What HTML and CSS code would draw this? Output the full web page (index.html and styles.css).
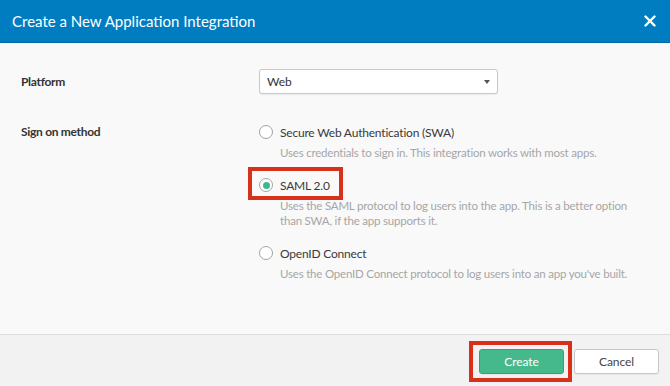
FILE: index.html
```html
<!DOCTYPE html>
<html lang="en">
<head>
    <meta charset="UTF-8">
    <meta name="viewport" content="width=device-width, initial-scale=1.0">
    <title>Create a New Application Integration</title>
    <link rel="stylesheet" href="styles.css">
</head>
<body>
    <div class="modal">
        <div class="modal-header">
            <h1>Create a New Application Integration</h1>
            <button class="close" aria-label="Close">
                <svg width="12" height="12" viewBox="0 0 12 12">
                    <path d="M1.5 1.5 L10.5 10.5 M10.5 1.5 L1.5 10.5" stroke="#fff" stroke-width="2.4" stroke-linecap="round"/>
                </svg>
            </button>
        </div>

        <div class="modal-body">
            <div class="row platform-row">
                <div class="label">Platform</div>
                <div class="field">
                    <div class="select">
                        <span>Web</span>
                        <span class="arrow"></span>
                    </div>
                </div>
            </div>

            <div class="row">
                <div class="label label-top">Sign on method</div>
                <div class="field">
                    <div class="option">
                        <div class="option-title">
                            <span class="radio"></span>
                            <span>Secure Web Authentication (SWA)</span>
                        </div>
                        <p class="option-desc">Uses credentials to sign in. This integration works with most apps.</p>
                    </div>
                    <div class="option">
                        <div class="option-title">
                            <span class="highlight highlight-saml">
                                <span class="radio checked"></span>
                                <span>SAML 2.0</span>
                            </span>
                        </div>
                        <p class="option-desc">Uses the SAML protocol to log users into the app. This is a better option<br>than SWA, if the app supports it.</p>
                    </div>
                    <div class="option">
                        <div class="option-title">
                            <span class="radio"></span>
                            <span>OpenID Connect</span>
                        </div>
                        <p class="option-desc">Uses the OpenID Connect protocol to log users into an app you've built.</p>
                    </div>
                </div>
            </div>
        </div>

        <div class="modal-footer">
            <span class="highlight highlight-create">
                <button class="btn btn-primary">Create</button>
            </span>
            <button class="btn">Cancel</button>
        </div>
    </div>
</body>
</html>
```

FILE: styles.css
```css
body {
    margin: 0;
    padding: 0;
    font-family: Lato, "Open Sans", sans-serif;
    color: #333;
    background: #f9f9f9;
}
.modal {
    display: flex;
    flex-direction: column;
    height: 386px;
}
.modal-header {
    display: flex;
    align-items: center;
    justify-content: space-between;
    height: 42px;
    padding: 0 14px 0 12px;
    background: #007dc1;
    border-bottom: 1px solid #0068a3;
}
.modal-header h1 {
    margin: 0;
    font-size: 15px;
    font-weight: 400;
    color: #fff;
}
.close {
    display: flex;
    padding: 0;
    border: none;
    background: none;
    cursor: pointer;
}
.modal-body {
    flex: 1;
    padding: 26px 21px 0 21px;
}
.row {
    display: grid;
    grid-template-columns: 238px 1fr;
}
.platform-row {
    align-items: center;
    margin-bottom: 29px;
}
.label {
    font-size: 12px;
    font-weight: 700;
    letter-spacing: -0.3px;
    color: #333;
}
.label-top {
    line-height: 18px;
}
.select {
    display: flex;
    align-items: center;
    justify-content: space-between;
    box-sizing: border-box;
    width: 239px;
    height: 25px;
    padding: 0 7px 0 7px;
    background: #fff;
    border: 1px solid #c8c8c8;
    border-radius: 3px;
    box-shadow: 0 1px 1px rgba(0, 0, 0, 0.06);
    font-size: 12px;
    color: #333;
}
.arrow {
    width: 0;
    height: 0;
    border-left: 3px solid transparent;
    border-right: 3px solid transparent;
    border-top: 4px solid #555;
}
.option {
    margin-bottom: 16px;
}
.option-title {
    display: flex;
    align-items: center;
    height: 18px;
    font-size: 12px;
    letter-spacing: -0.2px;
    color: #3a3a3a;
}
.option-title > span,
.highlight-saml {
    display: inline-flex;
    align-items: center;
}
.radio {
    box-sizing: border-box;
    width: 14px;
    height: 14px;
    margin-right: 7px;
    border: 1px solid #a3a3a3;
    border-radius: 50%;
    background: #fff;
}
.radio.checked {
    display: flex;
    align-items: center;
    justify-content: center;
}
.radio.checked::before {
    content: "";
    width: 7px;
    height: 7px;
    border-radius: 50%;
    background: #3db88b;
}
.option-desc {
    margin: 4px 0 0 21px;
    font-size: 11.5px;
    letter-spacing: -0.2px;
    line-height: 15px;
    color: #a6a6a6;
}
.highlight {
    position: relative;
}
.highlight::after {
    content: "";
    position: absolute;
    border: 4px solid #d8301b;
    pointer-events: none;
}
.highlight-saml::after {
    left: -11px;
    right: -13px;
    top: -11px;
    bottom: -7px;
}
.highlight-create {
    display: inline-flex;
}
.highlight-create::after {
    left: -10px;
    right: -8px;
    top: -8px;
    bottom: -8px;
}
.modal-footer {
    display: flex;
    justify-content: flex-end;
    align-items: flex-start;
    gap: 10px;
    height: 52px;
    box-sizing: border-box;
    padding: 14px 11px 0 0;
    background: #f2f2f2;
    border-top: 1px solid #dcdcdc;
}
.btn {
    width: 85px;
    height: 25px;
    padding: 0;
    font-family: Lato, "Open Sans", sans-serif;
    font-size: 12px;
    letter-spacing: -0.1px;
    color: #444;
    background: #fff;
    border: 1px solid #c6c6c6;
    border-radius: 3px;
    box-shadow: 0 1px 1px rgba(0, 0, 0, 0.05);
    cursor: pointer;
}
.btn-primary {
    color: #fff;
    background: #46b98c;
    border-color: #37a27a;
}
```
